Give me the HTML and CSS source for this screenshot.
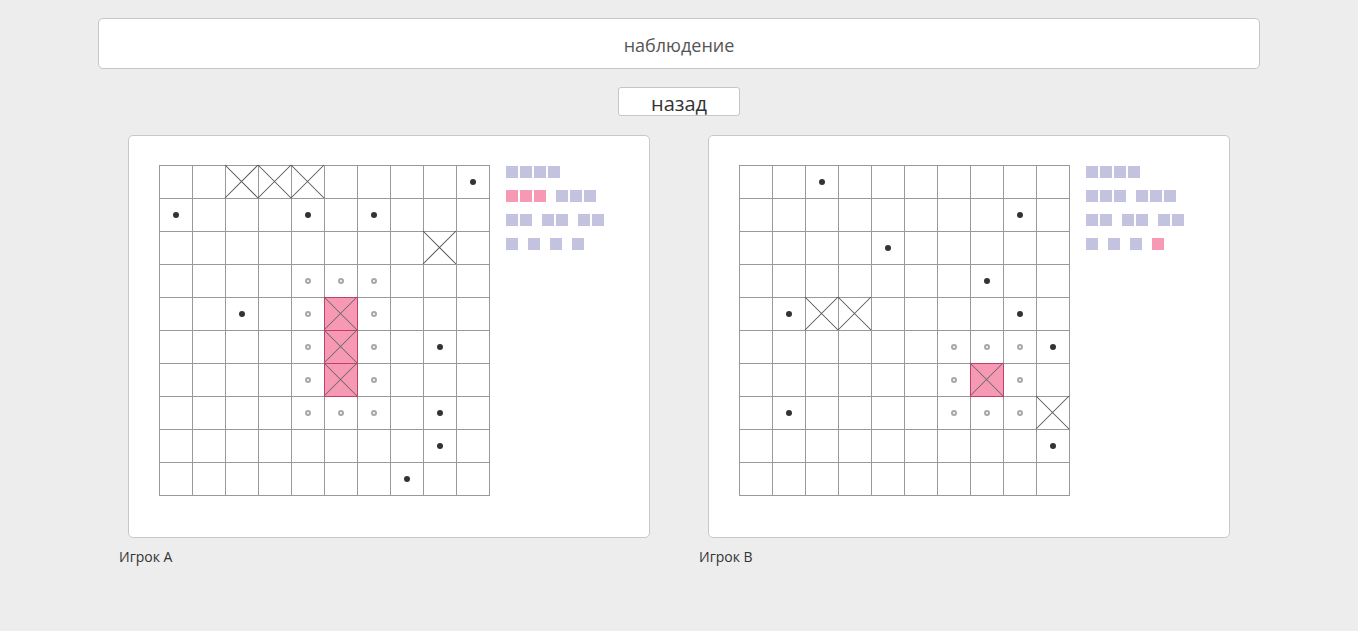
FILE: index.html
```html
<!DOCTYPE html>
<html lang="ru">
<head>
<meta charset="utf-8">
<title>наблюдение</title>
<link rel="stylesheet" href="styles.css">
</head>
<body>
<div class="page">
  <div class="topbar">наблюдение</div>
  <div class="actions"><button class="back">назад</button></div>
  <div class="boards">
    <div class="column">
      <div class="panel">
        <div class="grid">
          <span class="c"></span><span class="c"></span><span class="c x"><svg viewBox="0 0 32 32"><path d="M0 0L32 32M32 0L0 32"/></svg></span><span class="c x"><svg viewBox="0 0 32 32"><path d="M0 0L32 32M32 0L0 32"/></svg></span><span class="c x"><svg viewBox="0 0 32 32"><path d="M0 0L32 32M32 0L0 32"/></svg></span><span class="c"></span><span class="c"></span><span class="c"></span><span class="c"></span><span class="c"><i class="d"></i></span>
          <span class="c"><i class="d"></i></span><span class="c"></span><span class="c"></span><span class="c"></span><span class="c"><i class="d"></i></span><span class="c"></span><span class="c"><i class="d"></i></span><span class="c"></span><span class="c"></span><span class="c"></span>
          <span class="c"></span><span class="c"></span><span class="c"></span><span class="c"></span><span class="c"></span><span class="c"></span><span class="c"></span><span class="c"></span><span class="c x"><svg viewBox="0 0 32 32"><path d="M0 0L32 32M32 0L0 32"/></svg></span><span class="c"></span>
          <span class="c"></span><span class="c"></span><span class="c"></span><span class="c"></span><span class="c"><i class="o"></i></span><span class="c"><i class="o"></i></span><span class="c"><i class="o"></i></span><span class="c"></span><span class="c"></span><span class="c"></span>
          <span class="c"></span><span class="c"></span><span class="c"><i class="d"></i></span><span class="c"></span><span class="c"><i class="o"></i></span><span class="c x h"><svg viewBox="0 0 32 32"><path d="M0 0L32 32M32 0L0 32"/></svg></span><span class="c"><i class="o"></i></span><span class="c"></span><span class="c"></span><span class="c"></span>
          <span class="c"></span><span class="c"></span><span class="c"></span><span class="c"></span><span class="c"><i class="o"></i></span><span class="c x h"><svg viewBox="0 0 32 32"><path d="M0 0L32 32M32 0L0 32"/></svg></span><span class="c"><i class="o"></i></span><span class="c"></span><span class="c"><i class="d"></i></span><span class="c"></span>
          <span class="c"></span><span class="c"></span><span class="c"></span><span class="c"></span><span class="c"><i class="o"></i></span><span class="c x h"><svg viewBox="0 0 32 32"><path d="M0 0L32 32M32 0L0 32"/></svg></span><span class="c"><i class="o"></i></span><span class="c"></span><span class="c"></span><span class="c"></span>
          <span class="c"></span><span class="c"></span><span class="c"></span><span class="c"></span><span class="c"><i class="o"></i></span><span class="c"><i class="o"></i></span><span class="c"><i class="o"></i></span><span class="c"></span><span class="c"><i class="d"></i></span><span class="c"></span>
          <span class="c"></span><span class="c"></span><span class="c"></span><span class="c"></span><span class="c"></span><span class="c"></span><span class="c"></span><span class="c"></span><span class="c"><i class="d"></i></span><span class="c"></span>
          <span class="c"></span><span class="c"></span><span class="c"></span><span class="c"></span><span class="c"></span><span class="c"></span><span class="c"></span><span class="c"><i class="d"></i></span><span class="c"></span><span class="c"></span>
        </div>
        <div class="fleet">
          <div class="row"><div class="ship"><b></b><b></b><b></b><b></b></div></div>
          <div class="row"><div class="ship"><b class="s"></b><b class="s"></b><b class="s"></b></div><div class="ship"><b></b><b></b><b></b></div></div>
          <div class="row"><div class="ship"><b></b><b></b></div><div class="ship"><b></b><b></b></div><div class="ship"><b></b><b></b></div></div>
          <div class="row"><div class="ship"><b></b></div><div class="ship"><b></b></div><div class="ship"><b></b></div><div class="ship"><b></b></div></div>
        </div>
      </div>
      <div class="label">Игрок A</div>
    </div>
    <div class="column">
      <div class="panel">
        <div class="grid">
          <span class="c"></span><span class="c"></span><span class="c"><i class="d"></i></span><span class="c"></span><span class="c"></span><span class="c"></span><span class="c"></span><span class="c"></span><span class="c"></span><span class="c"></span>
          <span class="c"></span><span class="c"></span><span class="c"></span><span class="c"></span><span class="c"></span><span class="c"></span><span class="c"></span><span class="c"></span><span class="c"><i class="d"></i></span><span class="c"></span>
          <span class="c"></span><span class="c"></span><span class="c"></span><span class="c"></span><span class="c"><i class="d"></i></span><span class="c"></span><span class="c"></span><span class="c"></span><span class="c"></span><span class="c"></span>
          <span class="c"></span><span class="c"></span><span class="c"></span><span class="c"></span><span class="c"></span><span class="c"></span><span class="c"></span><span class="c"><i class="d"></i></span><span class="c"></span><span class="c"></span>
          <span class="c"></span><span class="c"><i class="d"></i></span><span class="c x"><svg viewBox="0 0 32 32"><path d="M0 0L32 32M32 0L0 32"/></svg></span><span class="c x"><svg viewBox="0 0 32 32"><path d="M0 0L32 32M32 0L0 32"/></svg></span><span class="c"></span><span class="c"></span><span class="c"></span><span class="c"></span><span class="c"><i class="d"></i></span><span class="c"></span>
          <span class="c"></span><span class="c"></span><span class="c"></span><span class="c"></span><span class="c"></span><span class="c"></span><span class="c"><i class="o"></i></span><span class="c"><i class="o"></i></span><span class="c"><i class="o"></i></span><span class="c"><i class="d"></i></span>
          <span class="c"></span><span class="c"></span><span class="c"></span><span class="c"></span><span class="c"></span><span class="c"></span><span class="c"><i class="o"></i></span><span class="c x h"><svg viewBox="0 0 32 32"><path d="M0 0L32 32M32 0L0 32"/></svg></span><span class="c"><i class="o"></i></span><span class="c"></span>
          <span class="c"></span><span class="c"><i class="d"></i></span><span class="c"></span><span class="c"></span><span class="c"></span><span class="c"></span><span class="c"><i class="o"></i></span><span class="c"><i class="o"></i></span><span class="c"><i class="o"></i></span><span class="c x"><svg viewBox="0 0 32 32"><path d="M0 0L32 32M32 0L0 32"/></svg></span>
          <span class="c"></span><span class="c"></span><span class="c"></span><span class="c"></span><span class="c"></span><span class="c"></span><span class="c"></span><span class="c"></span><span class="c"></span><span class="c"><i class="d"></i></span>
          <span class="c"></span><span class="c"></span><span class="c"></span><span class="c"></span><span class="c"></span><span class="c"></span><span class="c"></span><span class="c"></span><span class="c"></span><span class="c"></span>
        </div>
        <div class="fleet">
          <div class="row"><div class="ship"><b></b><b></b><b></b><b></b></div></div>
          <div class="row"><div class="ship"><b></b><b></b><b></b></div><div class="ship"><b></b><b></b><b></b></div></div>
          <div class="row"><div class="ship"><b></b><b></b></div><div class="ship"><b></b><b></b></div><div class="ship"><b></b><b></b></div></div>
          <div class="row"><div class="ship"><b></b></div><div class="ship"><b></b></div><div class="ship"><b></b></div><div class="ship"><b class="s"></b></div></div>
        </div>
      </div>
      <div class="label">Игрок B</div>
    </div>
  </div>
</div>
</body>
</html>
```

FILE: styles.css
```css
* { box-sizing: border-box; }

html, body {
  margin: 0;
  padding: 0;
  background: #ededed;
  font-family: "Open Sans", "Liberation Sans", sans-serif;
  color: #333;
}

.page {
  padding-top: 18px;
}

.topbar {
  width: 1162px;
  height: 51px;
  margin: 0 auto;
  background: #fff;
  border: 1px solid #c6c6c6;
  border-radius: 5px;
  display: flex;
  align-items: center;
  justify-content: center;
  font-size: 18px;
  color: #555;
  padding-top: 2px;
}

.actions {
  display: flex;
  justify-content: center;
  margin-top: 18px;
}

.back {
  width: 122px;
  height: 29px;
  background: #fff;
  border: 1px solid #c6c6c6;
  border-radius: 3px;
  font-family: "Open Sans", "Liberation Sans", sans-serif;
  font-size: 20px;
  line-height: 1;
  color: #333;
  padding: 4px 0 0;
  margin: 0;
}

.boards {
  display: flex;
  justify-content: center;
  gap: 38px;
  margin-top: 19px;
}

.column {
  width: 542px;
}

.panel {
  margin: 0 10px;
  width: 522px;
  height: 403px;
  background: #fff;
  border: 1px solid #c8c8c8;
  border-radius: 5px;
  padding: 29px 30px 41px;
  display: flex;
  align-items: flex-start;
  gap: 16px;
}

.grid {
  display: grid;
  grid-template-columns: repeat(10, 33px);
  grid-auto-rows: 33px;
  border-left: 1px solid #999;
  border-top: 1px solid #999;
  flex: none;
}

.c {
  position: relative;
  border-right: 1px solid #999;
  border-bottom: 1px solid #999;
  display: flex;
  align-items: center;
  justify-content: center;
}

.c svg {
  position: absolute;
  left: -1px;
  top: -1px;
  width: 33px;
  height: 33px;
  overflow: visible;
}

.c svg path {
  stroke: #555;
  stroke-width: 1;
  fill: none;
}

.h {
  background: #f799b4;
}

.h::after {
  content: "";
  position: absolute;
  left: -1px;
  top: -1px;
  right: -1px;
  bottom: -1px;
  border: 1px solid #c0406c;
}

.h svg path {
  stroke: #6a6a6a;
}

.d {
  display: block;
  width: 6px;
  height: 6px;
  border-radius: 50%;
  background: #333;
}

.o {
  display: block;
  width: 6px;
  height: 6px;
  border-radius: 50%;
  border: 2px solid #a8a8a8;
}

.fleet {
  margin-top: 1px;
  display: flex;
  flex-direction: column;
  gap: 12px;
}

.row {
  display: flex;
  gap: 10px;
}

.ship {
  display: flex;
  gap: 2px;
}

.ship b {
  display: block;
  width: 12px;
  height: 12px;
  background: #c3c3e0;
}

.ship b.s {
  background: #f799b4;
}

.label {
  margin-top: 9px;
  font-size: 14px;
  line-height: 20px;
  color: #333;
  padding-left: 1px;
}
```
